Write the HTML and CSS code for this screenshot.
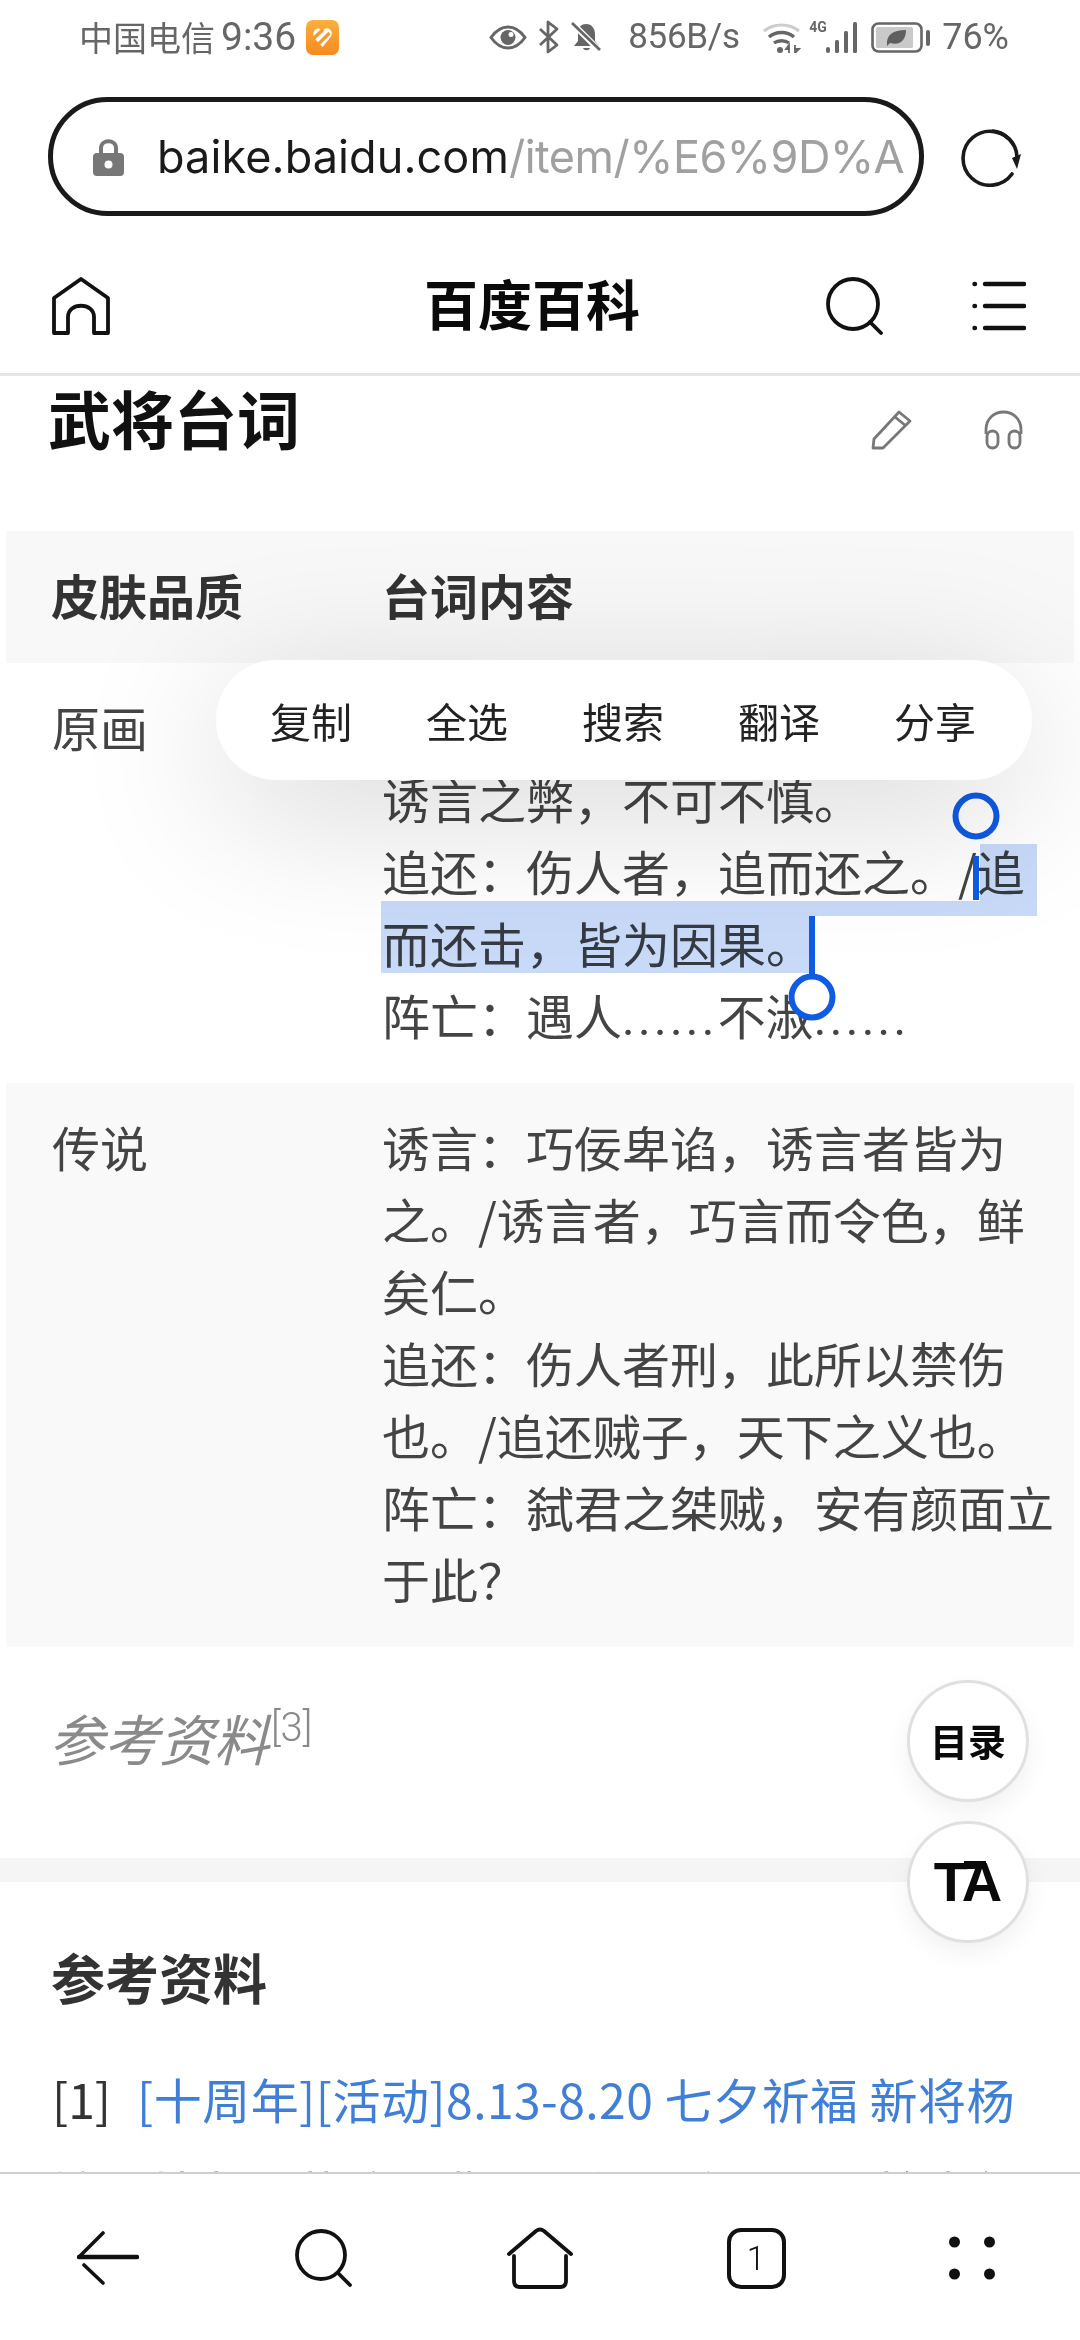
FILE: index.html
```html
<!DOCTYPE html>
<html lang="zh-CN">
<head>
<meta charset="utf-8">
<title>百度百科</title>
<link rel="stylesheet" href="styles.css">
</head>
<body>
<div class="screen">
  <header class="status">
    <div class="status-left">
      <span class="carrier">中国电信</span><span class="clock">9:36</span>
      <svg class="app-badge" viewBox="0 0 33 35"><defs><linearGradient id="og" x1="0" y1="0" x2="0" y2="1"><stop offset="0" stop-color="#fbb040"/><stop offset="1" stop-color="#f58a1f"/></linearGradient></defs><rect width="33" height="35" rx="7" fill="url(#og)"/><path d="M9 10 C12 7 15 9 16.5 11 C18 9 21 7 24 9.500 C27 12.500 26 16 23 19 L16.500 27 L10 20 C7 17 6.500 12.500 9 10Z" fill="#fff"/><path d="M7 19 L17 9.500 M11.500 25 L23.500 13" stroke="#f79a2b" stroke-width="3.400" fill="none"/></svg>
    </div>
    <div class="status-right">
      <svg class="i-eye" viewBox="0 0 38 25"><path d="M2 12.500 C8 4 13 2 19 2 C25 2 30 4 36 12.500 C30 21 25 23 19 23 C13 23 8 21 2 12.500Z" fill="none" stroke="#666" stroke-width="3"/><circle cx="19" cy="12.500" r="7.500" fill="#666"/><circle cx="22" cy="9.500" r="2.500" fill="#fff"/></svg>
      <svg class="i-bt" viewBox="0 0 22 34"><path d="M2 9 L19 25 L10 32 V2 L19 9 L2 25" fill="none" stroke="#666" stroke-width="2.800" stroke-linejoin="round"/></svg>
      <svg class="i-bell" viewBox="0 0 31 30"><path d="M15 2 C21 2 24 7 24 12 V19 L28 24 H3 L7 19 V12 C7 7 9 2 15 2Z" fill="#666"/><path d="M12 26 H19 C18 29 13 29 12 26Z" fill="#666"/><path d="M2 2 L29 29" stroke="#fff" stroke-width="6"/><path d="M1 1 L29 28" stroke="#666" stroke-width="2.800"/></svg>
      <span class="speed">856B/s</span>
      <svg class="i-wifi" viewBox="0 0 39 31"><path d="M2 9 C12 1 27 1 37 9" fill="none" stroke="#ccc" stroke-width="3"/><path d="M7 15 C14 9 25 9 32 15" fill="none" stroke="#666" stroke-width="3.400"/><path d="M12 21 C16 18 23 18 27 21" fill="none" stroke="#666" stroke-width="3.400"/><circle cx="18" cy="28" r="3" fill="#666"/><path d="M27 31 V23 L24 27 H28 M33 23 V31 L37 27 H32" fill="none" stroke="#666" stroke-width="1.800"/></svg>
      <span class="net">4G</span>
      <svg class="i-signal" viewBox="0 0 32 31"><g fill="#666"><rect x="0" y="25" width="4" height="6" rx="2"/><rect x="9" y="18" width="4" height="13" rx="1.500"/><rect x="18" y="9" width="4" height="22" rx="1.500"/><rect x="27" y="0" width="4" height="31" rx="1.500"/></g></svg>
      <svg class="i-batt" viewBox="0 0 60 31"><rect x="1.500" y="1.500" width="49" height="28" rx="6" fill="none" stroke="#666" stroke-width="2.600"/><rect x="5" y="5" width="37" height="21" rx="1.500" fill="#c9c9c9"/><path d="M16 23 C15 13 22 8 35 8 C35 18 29 24 19 21 L16 24Z" fill="#5f5f5f"/><rect x="55" y="8" width="4" height="16" rx="2" fill="#666"/></svg>
      <span class="battery">76%</span>
    </div>
  </header>

  <div class="urlrow">
    <div class="urlbar">
      <svg class="i-lock" viewBox="0 0 31 39"><path d="M8 18 V11 C8 2 23 2 23 11 V18" fill="none" stroke="#777" stroke-width="4"/><rect y="16" width="31" height="23" rx="4" fill="#777"/><circle cx="15.500" cy="27.500" r="4" fill="#fff"/></svg>
      <div class="url"><span class="host">baike.baidu.com</span><span class="path">/item/%E6%9D%A</span></div>
    </div>
    <svg class="i-reload" viewBox="0 0 60 60"><path d="M52 17 A27 27 0 1 0 51 47" fill="none" stroke="#1a1a1a" stroke-width="3.600" stroke-linecap="round"/><path d="M31 4 A27 27 0 0 1 56 30" fill="none" stroke="#1a1a1a" stroke-width="3.600"/><path d="M51 31 L60 27 L56 42Z" fill="#1a1a1a"/></svg>
  </div>

  <nav class="sitebar">
    <svg class="i-home" viewBox="0 0 58 58"><path d="M2 56 V21 L29 2 L56 21 V56 H42 V40 C42 25 16 25 16 40 V56Z" fill="none" stroke="#111" stroke-width="3.800" stroke-linejoin="round"/></svg>
    <div class="site-title">百度百科</div>
    <svg class="i-search" viewBox="0 0 58 58"><circle cx="27" cy="27" r="25" fill="none" stroke="#111" stroke-width="3.800"/><path d="M44 45 L55 56" stroke="#111" stroke-width="3.800" stroke-linecap="round"/></svg>
    <svg class="i-menu" viewBox="0 0 54 50"><g stroke="#111" stroke-width="4.400" stroke-linecap="round"><path d="M2.500 3 H3 M2.500 25 H3 M2.500 47 H3"/><path d="M13 3 H52 M13 25 H52 M13 47 H52"/></g></svg>
  </nav>

  <main class="content">
    <div class="title-row">
      <h1 class="title">武将台词</h1>
      <svg class="i-pen" viewBox="0 0 41 40"><path d="M2 38 L3 29 L28 2 L39 11 L12 38Z M24 7 L35 16" fill="none" stroke="#777" stroke-width="2.800" stroke-linejoin="round"/></svg>
      <svg class="i-phones" viewBox="0 0 41 40"><path d="M3 24 V20 C3 -4 38 -4 38 20 V24" fill="none" stroke="#777" stroke-width="2.800"/><rect x="4" y="21" width="11" height="17" rx="5.500" fill="none" stroke="#777" stroke-width="2.800"/><rect x="26" y="21" width="11" height="17" rx="5.500" fill="none" stroke="#777" stroke-width="2.800"/></svg>
    </div>

    <div class="table">
      <div class="tr head"><div class="td-a">皮肤品质</div><div class="td-b">台词内容</div></div>
      <div class="tr"><div class="td-a">原画</div><div class="td-b">诱言：巧言之弊，不可不防。/<br>诱言之弊，不可不慎。<br>追还：伤人者，追而还之。/追而还击，皆为因果。<br>阵亡：遇人<span class="dots">......</span>不淑<span class="dots">......</span></div></div>
      <div class="tr alt"><div class="td-a">传说</div><div class="td-b">诱言：巧佞卑谄，诱言者皆为之。/诱言者，巧言而令色，鲜矣仁。<br>追还：伤人者刑，此所以禁伤也。/追还贼子，天下之义也。<br>阵亡：弑君之桀贼，安有颜面立于此？</div></div>
    </div>

    <div class="footnote"><em class="note-text">参考资料</em><sup class="note-ref">[3]</sup></div>
    <div class="band"></div>

    <section class="refs">
      <h2 class="refs-title">参考资料</h2>
      <p class="ref">[1]<a class="ref-link">[十周年][活动]8.13-8.20 七夕祈福 新将杨婉、韩龙、蒋琬、费祎，作品登录福利抢先领取活动</a></p>
    </section>
  </main>

  <footer class="bottombar">
    <div class="tab"><svg class="i-back" viewBox="0 0 62 54"><g fill="none" stroke="#111" stroke-width="3.600" stroke-linecap="round"><path d="M2 26 L26 2"/><path d="M2 26 H60" stroke-width="4.400"/><path d="M7 34 L26 52"/></g></svg></div>
    <div class="tab"><svg class="i-find" viewBox="0 0 58 58"><circle cx="26" cy="26" r="24" fill="none" stroke="#111" stroke-width="3.800"/><path d="M43 44 L55 56" stroke="#111" stroke-width="3.800" stroke-linecap="round"/></svg></div>
    <div class="tab"><svg class="i-house" viewBox="0 0 66 62"><g fill="none" stroke="#111" stroke-width="3.800" stroke-linecap="round" stroke-linejoin="round"><path d="M2 27 L29 4 Q33 1 37 4 L64 27"/><path d="M7 29 V54 Q7 60 13 60 H53 Q59 60 59 54 V29"/></g></svg></div>
    <div class="tab"><div class="tabcount">1</div></div>
    <div class="tab"><svg class="i-more" viewBox="0 0 46 44"><g fill="#111"><circle cx="5.500" cy="6" r="5.500"/><circle cx="40.500" cy="6" r="5.500"/><circle cx="5.500" cy="38" r="5.500"/><circle cx="40.500" cy="38" r="5.500"/></g></svg></div>
  </footer>

  <svg class="selection" viewBox="0 0 1080 2340"><path d="M980 844 H1037 V916 H810 V973 H381 V901 H980Z" fill="#c8daf8"/></svg>
  <svg class="handles" viewBox="0 0 1080 2340">
    <g fill="#fff" stroke="#0f5be3" stroke-width="6">
      <path d="M976 856 V900" fill="none"/>
      <path d="M812 916 V975" fill="none"/>
      <circle cx="976" cy="816" r="20.500" fill="none"/>
      <circle cx="812" cy="997" r="20.500"/>
    </g>
  </svg>

  <div class="popup">
    <span class="pop-item">复制</span><span class="pop-item">全选</span><span class="pop-item">搜索</span><span class="pop-item">翻译</span><span class="pop-item">分享</span>
  </div>

  <div class="fab fab-toc">目录</div>
  <div class="fab fab-ta"><span class="ta">TA</span></div>
</div>
</body>
</html>
```
FILE: styles.css
```css
* { box-sizing: border-box; }
html, body { margin: 0; padding: 0; background: #fff; }
body { font-family: "Noto Sans CJK SC", "Noto Sans", sans-serif; color: #333; }
.screen { position: relative; width: 1080px; height: 2340px; overflow: hidden; display: flex; flex-direction: column; background: #fff; }

/* status bar */
.status { height: 97px; flex: none; display: flex; justify-content: space-between; align-items: flex-start; padding: 19px 71px 0 79px; color: #666; }
.status-left, .status-right { display: flex; align-items: center; height: 36px; }
.carrier { font-size: 34px; line-height: 36px; }
.clock { font-family: Roboto, sans-serif; font-size: 39px; line-height: 36px; margin-left: 6px; font-weight: 400; color: #666; }
.app-badge { width: 33px; height: 35px; margin-left: 10px; }
.i-eye { width: 38px; height: 25px; }
.i-bt { width: 22px; height: 34px; margin-left: 11px; }
.i-bell { width: 31px; height: 30px; margin-left: 11px; }
.speed { font-family: "Roboto", sans-serif; font-size: 35px; font-weight: 400; line-height: 36px; margin-left: 26px; width: 112px; letter-spacing: -.3px; }
.i-wifi { width: 39px; height: 31px; margin-left: 22px; }
.net { font-family: "Roboto", sans-serif; font-size: 14px; font-weight: 700; line-height: 14px; width: 17px; margin-left: 8px; align-self: flex-start; margin-top: 1px; }
.i-signal { width: 32px; height: 31px; }
.i-batt { width: 60px; height: 31px; margin-left: 13px; }
.battery { font-family: "Roboto", sans-serif; font-size: 36px; line-height: 36px; margin-left: 11px; }

/* url row */
.urlrow { height: 119px; flex: none; display: flex; align-items: center; padding-left: 48px; }
.urlbar { width: 876px; height: 119px; border: 5px solid #1a1a1a; border-radius: 60px; display: flex; align-items: center; padding: 0 17px 0 40px; }
.i-lock { width: 31px; height: 39px; flex: none; }
.url { margin-left: 33px; font-family: Inter, "Noto Sans", sans-serif; font-size: 45px; line-height: 60px; white-space: nowrap; flex: 1; }
.host { color: #1a1a1a; letter-spacing: .1px; }
.path { color: #a0a0a0; letter-spacing: -.5px; }
.i-reload { width: 60px; height: 60px; margin-left: 37px; flex: none; }

/* site bar */
.sitebar { height: 160px; flex: none; display: flex; align-items: center; padding: 23px 54px 0 52px; border-bottom: 3px solid #e6e6e6; }
.i-home { width: 58px; height: 58px; flex: none; }
.site-title { flex: 1; text-align: center; font-size: 54px; font-weight: 700; color: #0a0a0a; line-height: 64px; margin: -6px 0 0 128px; }
.i-search { width: 58px; height: 58px; flex: none; }
.i-menu { width: 54px; height: 50px; flex: none; margin-left: 88px; }

/* content */
.content { flex: 1; min-height: 0; overflow: hidden; }
.title-row { height: 155px; padding: 3px 56px 0 48px; display: flex; align-items: flex-start; }
.title { margin: 0; flex: 1; font-size: 63px; line-height: 76px; font-weight: 700; color: #111; }
.i-pen { width: 41px; height: 40px; margin-top: 31px; }
.i-phones { width: 41px; height: 40px; margin-top: 31px; margin-left: 71px; }

.table { margin: 0 6px; }
.tr { display: flex; padding: 27px 0 33px 46px; font-size: 48px; line-height: 72px; color: #444; }
.tr.head { background: #f8f8f8; font-weight: 700; color: #333; padding-left: 45px; }
.tr.alt { background: #f9f9f9; }
.td-a { width: 330px; flex: none; }
.head .td-a { width: 331px; }
.td-b { width: 676px; flex: none; }
.dots { font-family: Roboto, sans-serif; line-height: 0; letter-spacing: 3.300px; }

.footnote { height: 211px; padding: 60px 0 0 49px; line-height: 60px; white-space: nowrap; }
.note-text { font-size: 55px; font-style: italic; color: #8a8a8a; }
.note-ref { font-family: Roboto, sans-serif; font-size: 40px; font-weight: 300; color: #888; vertical-align: 20px; line-height: 0; margin-left: 2px; }
.band { height: 24px; background: #f5f5f5; }

.refs { padding: 65px 52px 0 51px; }
.refs-title { margin: 0; font-size: 54px; line-height: 60px; font-weight: 700; color: #333; }
.ref { margin: 45px 0 0 1px; font-size: 48px; line-height: 93px; color: #333; width: 976px; }
.ref-link { color: #3f7fd7; margin-left: 26px; letter-spacing: .45px; }

/* bottom bar */
.bottombar { height: 168px; flex: none; display: flex; align-items: flex-start; background: #fff; border-top: 2px solid #cfcfcf; padding-top: 53px; }
.tab { width: 216px; height: 62px; display: flex; align-items: center; justify-content: center; }
.i-back { width: 62px; height: 54px; }
.i-find { width: 58px; height: 58px; }
.i-house { width: 66px; height: 62px; }
.tabcount { width: 59px; height: 61px; border: 4px solid #111; border-radius: 14px; font-family: Roboto, sans-serif; font-size: 33px; font-weight: 300; line-height: 53px; text-align: center; color: #111; }
.i-more { width: 46px; height: 44px; }

/* overlays */
.selection { position: absolute; left: 0; top: 0; width: 1080px; height: 2340px; pointer-events: none; mix-blend-mode: multiply; }
.handles { position: absolute; left: 0; top: 0; width: 1080px; height: 2340px; pointer-events: none; }
.popup { position: absolute; left: 216px; top: 660px; width: 816px; height: 120px; border-radius: 60px; background: #fff; box-shadow: 0 30px 150px rgba(0, 0, 0, .17); display: flex; align-items: center; padding-left: 54px; gap: 74px; }
.pop-item { font-size: 41px; line-height: 54px; width: 82px; color: #222; white-space: nowrap; }
.fab { position: absolute; left: 907px; width: 122px; height: 122px; border-radius: 50%; background: #fff; border: 3px solid #e0e0e0; box-shadow: 0 10px 24px rgba(0, 0, 0, .06); display: flex; align-items: center; justify-content: center; color: #0a0a0a; }
.fab-toc { top: 1680px; font-size: 38px; font-weight: 700; line-height: 46px; padding-bottom: 3px; }
.fab-ta { top: 1821px; }
.ta { position: relative; font-family: "Liberation Sans", sans-serif; font-size: 56px; font-weight: 700; letter-spacing: -2px; line-height: 1; margin-left: -2px; }
.ta::after { content: ""; position: absolute; left: 30px; top: 7px; width: 22px; height: 8px; background: #0a0a0a; }
```
